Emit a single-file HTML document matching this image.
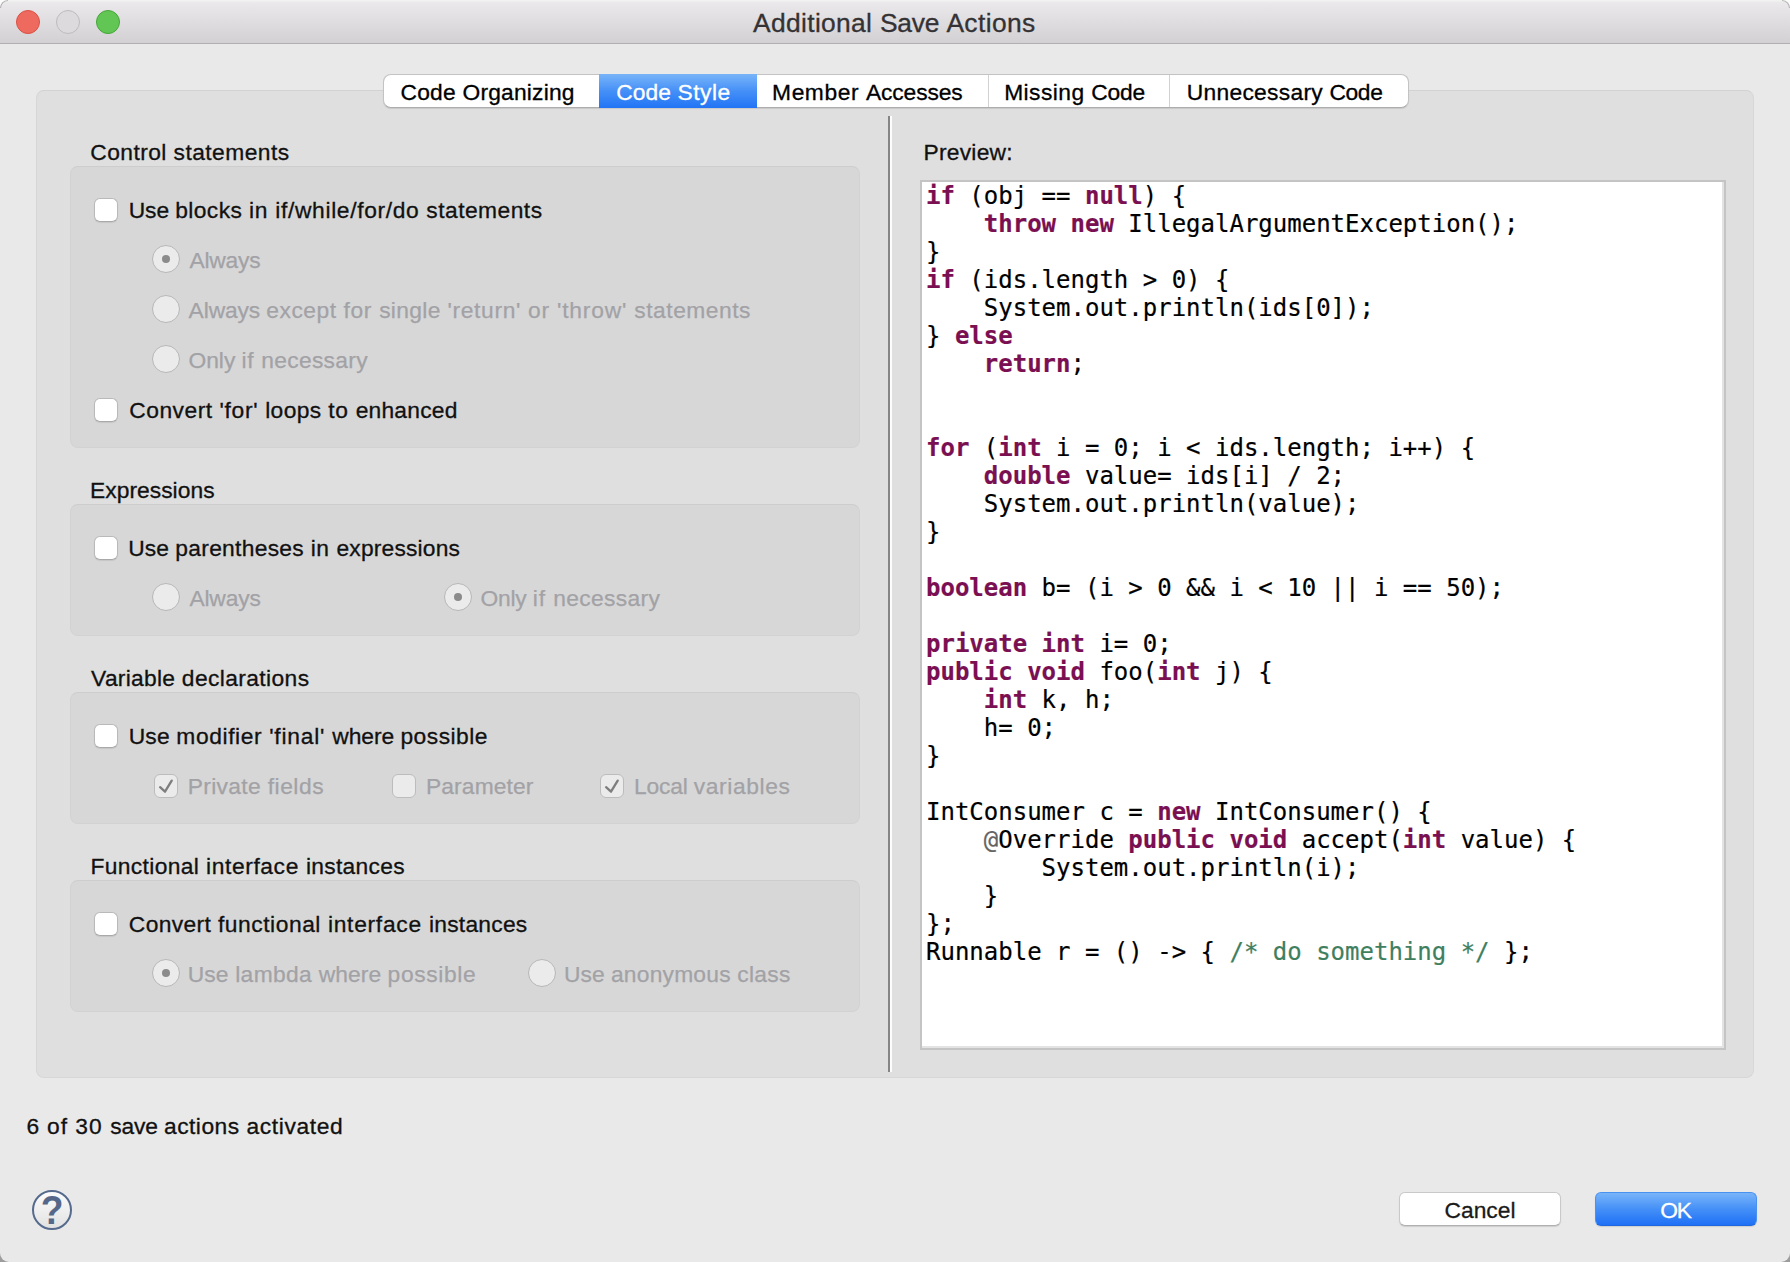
<!DOCTYPE html>
<html lang="en">
<head>
<meta charset="utf-8">
<title>Additional Save Actions</title>
<style>
html,body{margin:0;padding:0;}
body{width:1790px;height:1262px;overflow:hidden;background:linear-gradient(#fbfbfb 0,#fbfbfb 60px,#b4b4b4 1200px,#9c9c9c 100%);font-family:"Liberation Sans",sans-serif;}
#win{position:absolute;left:0;top:0;width:1790px;height:1262px;background:#e9e9e9;border-radius:8px 8px 9px 9px;overflow:hidden;}
#win *{box-sizing:border-box;}
.abs{position:absolute;}
.ca{position:absolute;top:0;width:8px;height:8px;border:1px solid rgba(0,0,0,.25);}
.ca.l{left:0;border-right:none;border-bottom:none;border-top-left-radius:8px;}
.ca.r{right:0;border-left:none;border-bottom:none;border-top-right-radius:8px;}
/* title bar */
#tb{position:absolute;left:0;top:0;width:1790px;height:44px;background:linear-gradient(#f4f4f4 0,#eae8ea 3px,#d3d1d3 42px,#d1cfd1 43px);border-bottom:1px solid #b1afb1;}
#title{position:absolute;-webkit-text-stroke:0.3px;top:6px;font-size:26.4px;line-height:34px;color:#343234;white-space:nowrap;}
.tl{position:absolute;top:10px;width:24px;height:24px;border-radius:50%;}
/* tab pane */
#pane{position:absolute;left:36px;top:90px;width:1718px;height:988px;background:#dfdfdf;border:1px solid #d7d7d7;border-top-color:#d2d2d2;border-radius:8px;}
#tabs{position:absolute;left:383px;top:74px;width:1026px;height:34px;background:#fff;border:1px solid #c3c3c3;border-bottom-color:#adadad;border-radius:8px;box-shadow:0 1px 1px rgba(0,0,0,.10);overflow:hidden;}
.seg{position:absolute;top:-1px;height:34px;background:#d2d2d2;}
#selseg{position:absolute;left:599px;top:74px;width:158px;height:34px;background:linear-gradient(#78b4f9 0,#4590f7 50%,#2174f5 100%);}
.tab{position:absolute;top:78px;height:28px;font-size:22.8px;line-height:28px;color:#000;-webkit-text-stroke:0.3px #000;white-space:nowrap;}
.tab.w{color:#fff;-webkit-text-stroke:0.3px #fff;}
/* labels */
.t{position:absolute;font-size:22.8px;line-height:28px;height:28px;color:#111;-webkit-text-stroke:0.3px #111;white-space:nowrap;}
.t.d{color:#a2a2a6;-webkit-text-stroke:0.25px #a2a2a6;}
.box{position:absolute;left:70px;width:790px;background:#d7d7d7;border:1px solid #d2d2d2;border-top-color:#cdcdcd;border-radius:8px;}
.cb{position:absolute;width:24px;height:24px;border-radius:6px;background:#fff;border:1px solid #b9b9b9;border-bottom-color:#a9a9a9;box-shadow:0 1px 1px rgba(0,0,0,.08);}
.cb.d{background:#ebebeb;border-color:#bcbcbc;box-shadow:none;}
.cb svg{position:absolute;left:-1px;top:-1px;}
.rb{position:absolute;width:28px;height:28px;border-radius:50%;background:#ebebeb;border:1px solid #b7b7b7;}
.rb.on::after{content:"";position:absolute;left:9px;top:9px;width:8px;height:8px;border-radius:50%;background:#8b8b8b;}
/* sash */
#sash{position:absolute;left:888px;top:116px;width:4px;height:956px;background:linear-gradient(90deg,#858585 0,#858585 2px,#fdfdfd 2px,#fdfdfd 100%);}
/* preview */
#pv{position:absolute;left:920px;top:180px;width:806px;height:870px;background:#fff;border:2px solid #c4c4c4;box-shadow:inset -2px -2px 0 #e3e3e3;}
#code{-webkit-text-stroke:0.2px;position:absolute;left:4px;top:0px;margin:0;font-family:"DejaVu Sans Mono","Liberation Mono",monospace;font-size:24px;line-height:28px;color:#000;white-space:pre;}
#code b{color:#7a0f51;font-weight:bold;}
#code i{color:#3f7f5f;font-style:normal;}
#code u{color:#646464;text-decoration:none;}
/* buttons */
.btn{position:absolute;top:1192px;height:34px;border-radius:6px;font-size:22.8px;line-height:35px;-webkit-text-stroke:0.3px;text-align:center;white-space:nowrap;}
#cancel{left:1399px;width:162px;background:#fff;border:1px solid #c9c9c9;border-bottom-color:#b0b0b0;color:#1a1a1a;box-shadow:0 1px 1px rgba(0,0,0,.12);}
#ok{left:1595px;width:162px;letter-spacing:-1.2px;text-indent:-1px;background:linear-gradient(#78b4f9 0,#4590f7 50%,#1f70f6 100%);border:1px solid #4a92f0;border-bottom-color:#1f68e0;color:#fff;box-shadow:0 1px 1px rgba(0,0,0,.12);}
#help{position:absolute;left:32px;top:1190px;width:40px;height:40px;border-radius:50%;border:2px solid #566a8e;background:linear-gradient(#fcfcfc 0,#efefef 50%,#e2e2e2 100%);color:#56688a;font-weight:bold;font-size:40px;line-height:36px;text-align:center;}
#help span{display:inline-block;transform:scaleX(.93);}
</style>
</head>
<body>
<div id="win">
  <div id="tb">
    <div class="tl" style="left:16px;background:#ee6a5f;border:1px solid #db5044;"></div>
    <div class="tl" style="left:56px;background:#dcdadc;border:1px solid #bdbbbd;"></div>
    <div class="tl" style="left:96px;background:#62c655;border:1px solid #45a637;"></div>
    <div class="ca l"></div><div class="ca r"></div>
    <div id="title" style="left:753.1px;"><span style="letter-spacing:0.327px">Additional </span><span style="letter-spacing:-0.207px">Save </span><span style="letter-spacing:0.374px">Actions</span></div>
  </div>

  <div id="pane"></div>

  <div id="tabs">
    <div class="seg" style="left:604px;width:1px;"></div>
    <div class="seg" style="left:785px;width:1px;"></div>
  </div>
  <div id="selseg"></div>
  <div class="tab" style="left:400.5px;"><span style="letter-spacing:0.232px">Code </span><span style="letter-spacing:0.200px">Organizing</span></div>
  <div class="tab w" style="left:616.2px;"><span style="letter-spacing:0.116px">Code </span><span style="letter-spacing:0.444px">Style</span></div>
  <div class="tab" style="left:772.1px;"><span style="letter-spacing:0.555px">Member </span><span style="letter-spacing:-0.108px">Accesses</span></div>
  <div class="tab" style="left:1004.2px;"><span style="letter-spacing:0.433px">Missing </span><span style="letter-spacing:-0.154px">Code</span></div>
  <div class="tab" style="left:1186.8px;"><span style="letter-spacing:0.281px">Unnecessary </span><span style="letter-spacing:-0.412px">Code</span></div>

  <!-- group 1 -->
  <div class="t" style="left:90.3px;top:138px;"><span style="letter-spacing:0.430px">Control </span><span style="letter-spacing:0.451px">statements</span></div>
  <div class="box" style="top:166px;height:282px;"></div>
  <div class="cb" style="left:94px;top:198px;"></div>
  <div class="t" style="left:128.7px;top:196px;"><span style="letter-spacing:-0.078px">Use </span><span style="letter-spacing:0.391px">blocks </span><span style="letter-spacing:0.748px">in </span><span style="letter-spacing:0.652px">if/while/for/do </span><span style="letter-spacing:0.465px">statements</span></div>
  <div class="rb on" style="left:152px;top:245px;"></div>
  <div class="t d" style="left:189.4px;top:246px;"><span style="letter-spacing:-0.196px">Always</span></div>
  <div class="rb" style="left:152px;top:295px;"></div>
  <div class="t d" style="left:188.6px;top:296px;"><span style="letter-spacing:-0.115px">Always </span><span style="letter-spacing:0.503px">except </span><span style="letter-spacing:0.703px">for </span><span style="letter-spacing:0.342px">single </span><span style="letter-spacing:0.664px">'return' </span><span style="letter-spacing:0.823px">or </span><span style="letter-spacing:0.803px">'throw' </span><span style="letter-spacing:0.522px">statements</span></div>
  <div class="rb" style="left:152px;top:345px;"></div>
  <div class="t d" style="left:188.5px;top:346px;"><span style="letter-spacing:-0.027px">Only </span><span style="letter-spacing:0.645px">if </span><span style="letter-spacing:0.305px">necessary</span></div>
  <div class="cb" style="left:94px;top:398px;"></div>
  <div class="t" style="left:129.2px;top:396px;"><span style="letter-spacing:0.526px">Convert </span><span style="letter-spacing:0.653px">'for' </span><span style="letter-spacing:0.387px">loops </span><span style="letter-spacing:0.680px">to </span><span style="letter-spacing:0.215px">enhanced</span></div>

  <!-- group 2 -->
  <div class="t" style="left:90.0px;top:476px;"><span style="letter-spacing:0.038px">Expressions</span></div>
  <div class="box" style="top:504px;height:132px;"></div>
  <div class="cb" style="left:94px;top:536px;"></div>
  <div class="t" style="left:128.2px;top:534px;"><span style="letter-spacing:0.064px">Use </span><span style="letter-spacing:0.291px">parentheses </span><span style="letter-spacing:0.598px">in </span><span style="letter-spacing:0.176px">expressions</span></div>
  <div class="rb" style="left:152px;top:583px;"></div>
  <div class="t d" style="left:189.4px;top:584px;"><span style="letter-spacing:-0.144px">Always</span></div>
  <div class="rb on" style="left:444px;top:583px;"></div>
  <div class="t d" style="left:480.4px;top:584px;"><span style="letter-spacing:-0.169px">Only </span><span style="letter-spacing:0.930px">if </span><span style="letter-spacing:0.323px">necessary</span></div>

  <!-- group 3 -->
  <div class="t" style="left:91.1px;top:664px;"><span style="letter-spacing:0.271px">Variable </span><span style="letter-spacing:0.391px">declarations</span></div>
  <div class="box" style="top:692px;height:132px;"></div>
  <div class="cb" style="left:94px;top:724px;"></div>
  <div class="t" style="left:128.7px;top:722px;"><span style="letter-spacing:0.186px">Use </span><span style="letter-spacing:0.609px">modifier </span><span style="letter-spacing:0.766px">'final' </span><span style="letter-spacing:-0.041px">where </span><span style="letter-spacing:0.488px">possible</span></div>
  <div class="cb d" style="left:154px;top:774px;"><svg width="24" height="24" viewBox="0 0 24 24"><path d="M6.1 13.2 L11 17.7 L17.7 6.6" fill="none" stroke="#7e7e7e" stroke-width="2.3" stroke-linecap="round" stroke-linejoin="round"/></svg></div>
  <div class="t d" style="left:187.7px;top:772px;"><span style="letter-spacing:0.342px">Private </span><span style="letter-spacing:0.526px">fields</span></div>
  <div class="cb d" style="left:392px;top:774px;"></div>
  <div class="t d" style="left:426.0px;top:772px;"><span style="letter-spacing:0.120px">Parameter</span></div>
  <div class="cb d" style="left:600px;top:774px;"><svg width="24" height="24" viewBox="0 0 24 24"><path d="M6.1 13.2 L11 17.7 L17.7 6.6" fill="none" stroke="#7e7e7e" stroke-width="2.3" stroke-linecap="round" stroke-linejoin="round"/></svg></div>
  <div class="t d" style="left:633.9px;top:772px;"><span style="letter-spacing:-0.167px">Local </span><span style="letter-spacing:0.614px">variables</span></div>

  <!-- group 4 -->
  <div class="t" style="left:90.4px;top:852px;"><span style="letter-spacing:0.367px">Functional </span><span style="letter-spacing:0.615px">interface </span><span style="letter-spacing:0.295px">instances</span></div>
  <div class="box" style="top:880px;height:132px;"></div>
  <div class="cb" style="left:94px;top:912px;"></div>
  <div class="t" style="left:128.8px;top:910px;"><span style="letter-spacing:0.373px">Convert </span><span style="letter-spacing:0.546px">functional </span><span style="letter-spacing:0.729px">interface </span><span style="letter-spacing:0.253px">instances</span></div>
  <div class="rb on" style="left:152px;top:959px;"></div>
  <div class="t d" style="left:187.7px;top:960px;"><span style="letter-spacing:0.156px">Use </span><span style="letter-spacing:0.356px">lambda </span><span style="letter-spacing:0.063px">where </span><span style="letter-spacing:0.629px">possible</span></div>
  <div class="rb" style="left:528px;top:959px;"></div>
  <div class="t d" style="left:564.1px;top:960px;"><span style="letter-spacing:-0.011px">Use </span><span style="letter-spacing:0.221px">anonymous </span><span style="letter-spacing:0.269px">class</span></div>

  <div id="sash"></div>

  <div class="t" style="left:923.6px;top:138px;"><span style="letter-spacing:0.222px">Preview:</span></div>
  <div id="pv"><pre id="code"><b>if</b> (obj == <b>null</b>) {
    <b>throw</b> <b>new</b> IllegalArgumentException();
}
<b>if</b> (ids.length &gt; 0) {
    System.out.println(ids[0]);
} <b>else</b>
    <b>return</b>;


<b>for</b> (<b>int</b> i = 0; i &lt; ids.length; i++) {
    <b>double</b> value= ids[i] / 2;
    System.out.println(value);
}

<b>boolean</b> b= (i &gt; 0 &amp;&amp; i &lt; 10 || i == 50);

<b>private</b> <b>int</b> i= 0;
<b>public</b> <b>void</b> foo(<b>int</b> j) {
    <b>int</b> k, h;
    h= 0;
}

IntConsumer c = <b>new</b> IntConsumer() {
    <u>@</u>Override <b>public</b> <b>void</b> accept(<b>int</b> value) {
        System.out.println(i);
    }
};
Runnable r = () -&gt; { <i>/* do something */</i> };</pre></div>

  <div class="t" style="left:26.5px;top:1112px;"><span style="letter-spacing:0.771px">6 </span><span style="letter-spacing:0.905px">of </span><span style="letter-spacing:1.171px">30 </span><span style="letter-spacing:-0.173px">save </span><span style="letter-spacing:0.491px">actions </span><span style="letter-spacing:0.631px">activated</span></div>
  <div id="help"><span>?</span></div>
  <div class="btn" id="cancel">Cancel</div>
  <div class="btn" id="ok">OK</div>
</div>
</body>
</html>
